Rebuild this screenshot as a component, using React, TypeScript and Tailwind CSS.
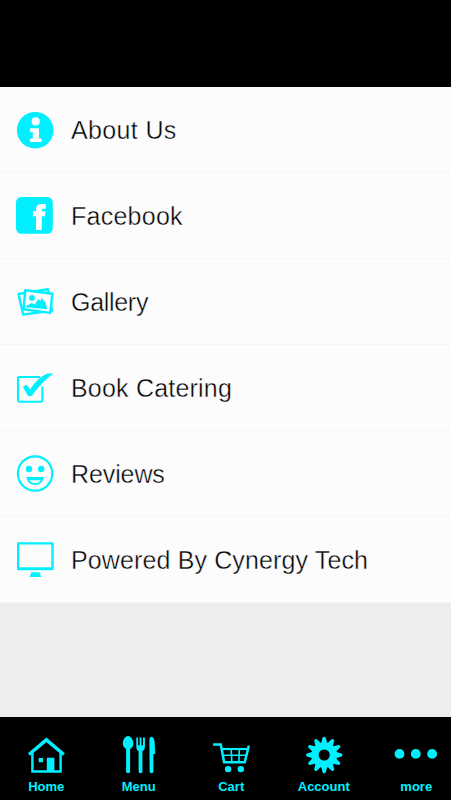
import type { ReactNode } from "react";

type Item = { label: string; icon: ReactNode; text?: string };

const teeth = [0, 30, 60, 90, 120, 150, 180, 210, 240, 270, 300, 330];

const InfoIcon = () => (
  <svg viewBox="0 0 38 38" className="w-[38px] h-[38px]">
    <circle cx="19.2" cy="19.2" r="18.3" fill="currentColor" />
    <circle cx="19.7" cy="10.4" r="4.1" fill="#fcfcfc" />
    <path
      d="M14.8 17.3H23V27.6H24.9Q25.7 27.6 25.7 28.4V30.2Q25.7 31 24.9 31H14.8Q14 31 14 30.2V28.4Q14 27.6 14.8 27.6H16.8V21H14.8Q14 21 14 20.2V18.1Q14 17.3 14.8 17.3Z"
      fill="#fcfcfc"
    />
  </svg>
);

const FacebookIcon = () => (
  <svg viewBox="0 0 38 38" className="w-[38px] h-[38px]">
    <rect y="0" width="36.8" height="36.8" rx="5.5" fill="currentColor" />
    <path
      d="M20 33V19.3H17V14.3H20V12.2Q20 7 25.4 7H29.7V11.8H27.2Q25.8 11.8 25.8 13.2V14.3H29.6L29 19.3H25.8V33Z"
      fill="#fcfcfc"
    />
  </svg>
);

const GalleryIcon = () => (
  <svg
    viewBox="0 0 38 38"
    className="w-[38px] h-[38px]"
    fill="none"
    stroke="currentColor"
    strokeWidth="2.4"
    strokeLinejoin="round"
  >
    <path d="M2.6 11L31.8 6.2L36 27.5L7.1 31.6Z" />
    <path d="M9.3 7.3L36.4 10.8L34.3 29.9L7.6 26.3Z" fill="#fcfcfc" />
    <circle cx="16" cy="14.9" r="2.8" fill="currentColor" stroke="none" />
    <path
      d="M10.2 24.2V22.8L13 21.4L15.5 20L18.5 21.6L22.5 16L24.5 17.8L25.8 14.8L28 18.5L29.6 18.7L31 26.2Z"
      fill="currentColor"
      stroke="none"
    />
  </svg>
);

const CheckIcon = () => (
  <svg viewBox="0 0 38 38" className="w-[38px] h-[38px]">
    <path
      d="M24 8H3.4Q2 8 2 9.4V31.3Q2 32.7 3.4 32.7H25Q26.4 32.7 26.4 31.3V17.5"
      fill="none"
      stroke="currentColor"
      strokeWidth="2.1"
    />
    <path
      d="M7.1 18.4Q7.6 16 10 15.9Q11.4 16 12 17.6L14 20.6C18.5 13.5 24 7 31.5 4.4H37.6C30.5 9.5 22.5 17 16.6 26Q14 28.4 11.6 26.2Z"
      fill="currentColor"
    />
  </svg>
);

const SmileIcon = () => (
  <svg viewBox="0 0 38 38" className="w-[38px] h-[38px]">
    <circle cx="19.1" cy="18.5" r="17.2" fill="none" stroke="currentColor" strokeWidth="2.2" />
    <circle cx="13" cy="14" r="3.2" fill="currentColor" />
    <circle cx="25.2" cy="14" r="3.2" fill="currentColor" />
    <path d="M10.2 22H28C27 27.2 23.5 30 19.1 30S11.2 27.2 10.2 22Z" fill="currentColor" />
    <path d="M13.4 25.2H24.8Q22.8 28.2 19.1 28.2T13.4 25.2Z" fill="#fcfcfc" />
  </svg>
);

const MonitorIcon = () => (
  <svg viewBox="0 0 38 38" className="w-[38px] h-[38px]" fill="currentColor">
    <path
      fillRule="evenodd"
      d="M2.2 1.3H36.5Q37.7 1.3 37.7 2.5V28.1Q37.7 29.3 36.5 29.3H2.2Q1 29.3 1 28.1V2.5Q1 1.3 2.2 1.3ZM3.3 3.6V26.2H35.3V3.6Z"
    />
    <path d="M15.3 31.3H23.4L25.3 36.1H13.6Z" />
  </svg>
);

const HomeIcon = () => (
  <svg viewBox="0 0 38 38" className="w-[38px] h-[38px]">
    <path d="M5.4 17V35.5H33.6V17" fill="none" stroke="currentColor" strokeWidth="2.4" />
    <path d="M2 18.5L19.4 3.9L36.8 18.5" fill="none" stroke="currentColor" strokeWidth="3.5" />
    <path d="M11.7 22H16V26.2H11.7ZM19.8 21.7H27.4V35.5H19.8Z" fill="currentColor" />
  </svg>
);

const MenuIcon = () => (
  <svg viewBox="0 0 38 38" className="w-[38px] h-[38px]" fill="currentColor">
    <path d="M8.1 0C11 0 13.4 4 13.4 7.6C13.4 10.2 11.8 12.2 10.1 13V35.5Q10.1 37.3 8.1 37.3T6.1 35.5V13C4.4 12.2 2.8 10.2 2.8 7.6C2.8 4 5.2 0 8.1 0Z" />
    <path d="M16.3 1.8Q17.2 .6 18.1 1.8V9.3H19.6V1.8Q20.6 .6 21.5 1.8V9.3H23V1.8Q24 .6 24.9 1.8V10.5C24.9 13.2 23.8 14.6 22.4 15.2V35.5Q22.4 37.3 20.5 37.3T18.6 35.5V15.2C17.3 14.6 16.3 13.2 16.3 10.5Z" />
    <path d="M29.4 3.5Q29.6 .7 31.8 .7Q34.5 1.5 34.7 7L35.2 18H33.4V35.5Q33.4 37.3 31.5 37.3T29.6 35.5Z" />
  </svg>
);

const CartIcon = () => (
  <svg viewBox="0 0 38 38" className="w-[38px] h-[38px]">
    <path
      d="M1.1 8.5H8.8L12.1 26.2H32.7L36.9 9.6"
      fill="none"
      stroke="currentColor"
      strokeWidth="2.5"
    />
    <path d="M9.7 13H36" stroke="currentColor" strokeWidth="2.2" />
    <path d="M11 19.2H34.3M19.2 13L19.8 26M27.3 13L26.9 26" stroke="currentColor" strokeWidth="1.6" />
    <circle cx="16.1" cy="33.1" r="3.2" fill="currentColor" />
    <circle cx="28.8" cy="33.1" r="3.2" fill="currentColor" />
  </svg>
);

const GearIcon = () => (
  <svg viewBox="0 0 38 38" className="w-[38px] h-[38px]">
    <circle cx="19.2" cy="19" r="9.2" fill="none" stroke="currentColor" strokeWidth="7.2" />
    {teeth.map((deg) => (
      <path
        key={deg}
        d="M16 7.6L17.7 1.6Q19.2 -.2 20.7 1.6L22.4 7.6Z"
        transform={`rotate(${deg} 19.2 19)`}
        fill="currentColor"
      />
    ))}
  </svg>
);

const MoreIcon = () => (
  <svg viewBox="0 0 44 38" className="w-11 h-[38px]" fill="currentColor">
    <circle cx="5.5" cy="17.9" r="4.9" />
    <circle cx="21.8" cy="17.9" r="4.9" />
    <circle cx="38.1" cy="17.9" r="4.9" />
  </svg>
);

const rows: Item[] = [
  { label: "About Us", icon: <InfoIcon />, text: "tracking-[0.35px]" },
  { label: "Facebook", icon: <FacebookIcon />, text: "tracking-[0.25px]" },
  { label: "Gallery", icon: <GalleryIcon />, text: "tracking-[-0.3px]" },
  { label: "Book Catering", icon: <CheckIcon />, text: "tracking-[0.2px]" },
  { label: "Reviews", icon: <SmileIcon />, text: "tracking-[-0.1px]" },
  { label: "Powered By Cynergy Tech", icon: <MonitorIcon />, text: "tracking-[0.13px]" },
];

const tabs: Item[] = [
  { label: "Home", icon: <HomeIcon /> },
  { label: "Menu", icon: <MenuIcon /> },
  { label: "Cart", icon: <CartIcon /> },
  { label: "Account", icon: <GearIcon /> },
  { label: "more", icon: <MoreIcon /> },
];

const App = () => {
  return (
    <div className="flex flex-col w-full h-screen overflow-hidden bg-[#ededed] font-['Liberation_Sans',Arial,sans-serif]">
      <header className="h-[87px] shrink-0 bg-black"></header>
      <ul className="flex-1">
        {rows.map((row) => (
          <li
            key={row.label}
            className="flex items-center h-[86px] pl-4 bg-[#fcfcfc] border-b border-[#f5f5f5]"
          >
            <span className="text-[#00f0ff]">{row.icon}</span>
            <span
              className={`ml-[17px] text-[25px] leading-8 text-black whitespace-nowrap [-webkit-text-stroke:0.4px_#fcfcfc] ${row.text}`}
            >
              {row.label}
            </span>
          </li>
        ))}
      </ul>
      <nav className="flex h-[83px] shrink-0 bg-black text-[#00f0ff]">
        {tabs.map((tab) => (
          <button key={tab.label} className="flex flex-col items-center w-[92.5px] shrink-0 pt-[19px]">
            {tab.icon}
            <span className="mt-[5px] text-[13px] leading-4 font-bold">{tab.label}</span>
          </button>
        ))}
      </nav>
    </div>
  );
};

export default App;
